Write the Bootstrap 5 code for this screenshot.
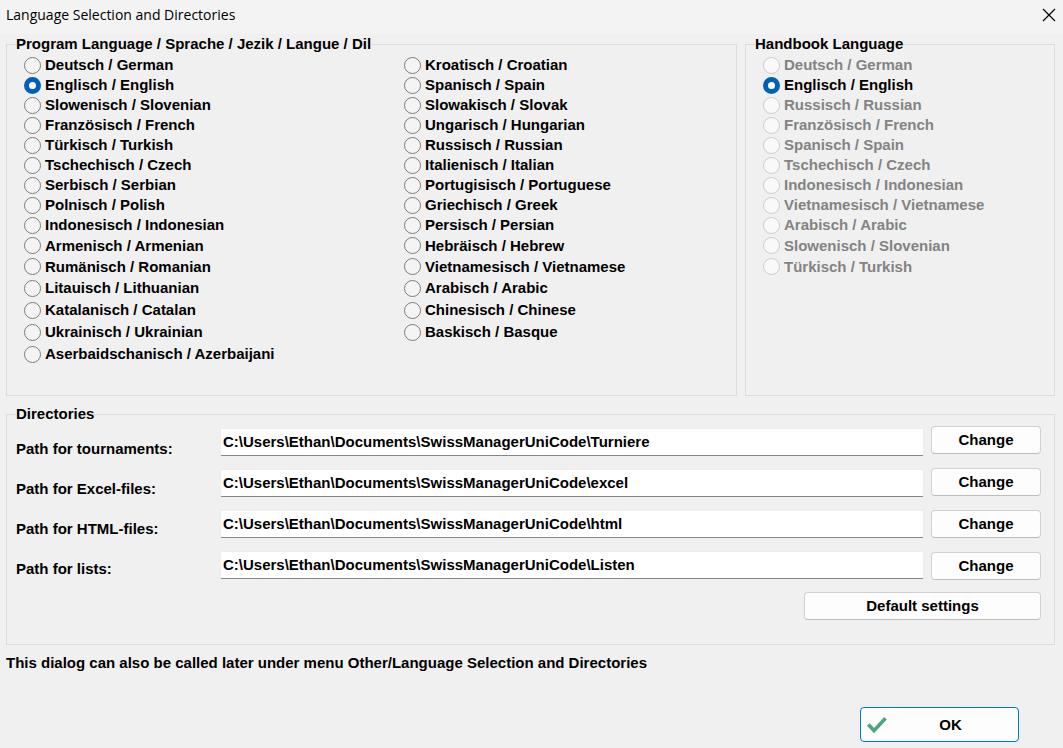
<!DOCTYPE html>
<html lang="en">
<head>
<meta charset="utf-8">
<meta name="viewport" content="width=device-width, initial-scale=1">
<title>Language Selection and Directories</title>
<link href="https://cdn.jsdelivr.net/npm/bootstrap@5.3.0/dist/css/bootstrap.min.css" rel="stylesheet">
<style>
  body { background: #f0f0f0; color: #000; font: bold 15px/20px "Liberation Sans", Arial, sans-serif; }
  .title-bar { background: #f3f3f3; height: 34px; padding: 0 6px 4px; }
  .title-bar h1 { font: 14px/20px "Open Sans", "Noto Sans", sans-serif; }
  .close-btn { width: 16px; height: 16px; color: #000; }
  .dialog-body { padding: 0 8px 0 6px; }
  .languages { display: grid; grid-template-columns: 731fr 310fr; gap: 8px; margin-bottom: 8px; }
  .group { border: 1px solid #dcdcdc; padding: 0 9px; }
  .group legend { float: none; width: auto; font-size: 15px; line-height: 20px; margin: 0; }
  .program { display: grid; grid-template-columns: 380fr 323fr; padding: 1px 0 30px 8px; }
  .handbook { padding: 1px 0 0 8px; }
  .option { display: flex; align-items: center; gap: 4px; height: 20px; min-height: 0; margin: 0; padding: 0; }
  .option:nth-child(n+10) { height: 21px; }
  .option:nth-child(n+12) { height: 22px; }
  .option .form-check-input { flex: none; float: none; width: 17px; height: 17px; margin: 0; background-color: #f4f4f4; border: 1px solid #7d7d7d; }
  .option .form-check-input:checked { background: #fff; border: 5px solid #005fb8; }
  .option .form-check-input:disabled { opacity: 1; background-color: #f9f9f9; border-color: #cbcbcb; }
  .option .form-check-input:disabled ~ .form-check-label { opacity: 1; color: #838383; }
  .paths { display: grid; grid-template-columns: 204px 1fr 110px; align-items: start; }
  .stack { display: flex; flex-direction: column; }
  .path-labels { gap: 20px; padding-top: 15px; }
  .path-inputs { gap: 13px; padding: 4px 7px 0 0; }
  .path-buttons { gap: 14px; padding-top: 2px; }
  .path-inputs .form-control { height: 28px; padding: 0 2px 2px; border: 1px solid #ededed; border-bottom-color: #868686; border-radius: 2px; font: inherit; color: #000; background: #fff; }
  .push { height: 28px; padding: 0; font: inherit; color: #000; background: #fdfdfd; border: 1px solid #d0d0d0; border-bottom-color: #bcbcbc; border-radius: 4px; }
  .default-btn { width: 237px; }
  .actions { padding: 34px 36px 6px 0; }
  .ok-btn { width: 159px; height: 35px; border: 1px solid #0078d4; padding: 0 4px 0 6px; }
</style>
</head>
<body>
<header class="title-bar d-flex align-items-center justify-content-between">
  <h1 class="m-0">Language Selection and Directories</h1>
  <button type="button" class="close-btn btn border-0 p-0 d-flex align-items-center justify-content-center" aria-label="Close">
    <svg width="14" height="14" viewBox="0 0 14 14" fill="none" stroke="currentColor" stroke-width="1.2"><path d="M1 1l12 12M13 1L1 13"/></svg>
  </button>
</header>
<main class="dialog-body">
<form>
  <div class="languages">
    <fieldset class="group">
      <legend>Program Language / Sprache / Jezik / Langue / Dil</legend>
      <div class="program">
        <div>
          <div class="option"><input class="form-check-input" type="radio" name="program" id="p1"><label class="form-check-label" for="p1">Deutsch / German</label></div>
          <div class="option"><input class="form-check-input" type="radio" name="program" id="p2" checked><label class="form-check-label" for="p2">Englisch / English</label></div>
          <div class="option"><input class="form-check-input" type="radio" name="program" id="p3"><label class="form-check-label" for="p3">Slowenisch / Slovenian</label></div>
          <div class="option"><input class="form-check-input" type="radio" name="program" id="p4"><label class="form-check-label" for="p4">Französisch / French</label></div>
          <div class="option"><input class="form-check-input" type="radio" name="program" id="p5"><label class="form-check-label" for="p5">Türkisch / Turkish</label></div>
          <div class="option"><input class="form-check-input" type="radio" name="program" id="p6"><label class="form-check-label" for="p6">Tschechisch / Czech</label></div>
          <div class="option"><input class="form-check-input" type="radio" name="program" id="p7"><label class="form-check-label" for="p7">Serbisch / Serbian</label></div>
          <div class="option"><input class="form-check-input" type="radio" name="program" id="p8"><label class="form-check-label" for="p8">Polnisch / Polish</label></div>
          <div class="option"><input class="form-check-input" type="radio" name="program" id="p9"><label class="form-check-label" for="p9">Indonesisch / Indonesian</label></div>
          <div class="option"><input class="form-check-input" type="radio" name="program" id="p10"><label class="form-check-label" for="p10">Armenisch / Armenian</label></div>
          <div class="option"><input class="form-check-input" type="radio" name="program" id="p11"><label class="form-check-label" for="p11">Rumänisch / Romanian</label></div>
          <div class="option"><input class="form-check-input" type="radio" name="program" id="p12"><label class="form-check-label" for="p12">Litauisch / Lithuanian</label></div>
          <div class="option"><input class="form-check-input" type="radio" name="program" id="p13"><label class="form-check-label" for="p13">Katalanisch / Catalan</label></div>
          <div class="option"><input class="form-check-input" type="radio" name="program" id="p14"><label class="form-check-label" for="p14">Ukrainisch / Ukrainian</label></div>
          <div class="option"><input class="form-check-input" type="radio" name="program" id="p15"><label class="form-check-label" for="p15">Aserbaidschanisch / Azerbaijani</label></div>
        </div>
        <div>
          <div class="option"><input class="form-check-input" type="radio" name="program" id="p16"><label class="form-check-label" for="p16">Kroatisch / Croatian</label></div>
          <div class="option"><input class="form-check-input" type="radio" name="program" id="p17"><label class="form-check-label" for="p17">Spanisch / Spain</label></div>
          <div class="option"><input class="form-check-input" type="radio" name="program" id="p18"><label class="form-check-label" for="p18">Slowakisch / Slovak</label></div>
          <div class="option"><input class="form-check-input" type="radio" name="program" id="p19"><label class="form-check-label" for="p19">Ungarisch / Hungarian</label></div>
          <div class="option"><input class="form-check-input" type="radio" name="program" id="p20"><label class="form-check-label" for="p20">Russisch / Russian</label></div>
          <div class="option"><input class="form-check-input" type="radio" name="program" id="p21"><label class="form-check-label" for="p21">Italienisch / Italian</label></div>
          <div class="option"><input class="form-check-input" type="radio" name="program" id="p22"><label class="form-check-label" for="p22">Portugisisch / Portuguese</label></div>
          <div class="option"><input class="form-check-input" type="radio" name="program" id="p23"><label class="form-check-label" for="p23">Griechisch / Greek</label></div>
          <div class="option"><input class="form-check-input" type="radio" name="program" id="p24"><label class="form-check-label" for="p24">Persisch / Persian</label></div>
          <div class="option"><input class="form-check-input" type="radio" name="program" id="p25"><label class="form-check-label" for="p25">Hebräisch / Hebrew</label></div>
          <div class="option"><input class="form-check-input" type="radio" name="program" id="p26"><label class="form-check-label" for="p26">Vietnamesisch / Vietnamese</label></div>
          <div class="option"><input class="form-check-input" type="radio" name="program" id="p27"><label class="form-check-label" for="p27">Arabisch / Arabic</label></div>
          <div class="option"><input class="form-check-input" type="radio" name="program" id="p28"><label class="form-check-label" for="p28">Chinesisch / Chinese</label></div>
          <div class="option"><input class="form-check-input" type="radio" name="program" id="p29"><label class="form-check-label" for="p29">Baskisch / Basque</label></div>
        </div>
      </div>
    </fieldset>
    <fieldset class="group">
      <legend>Handbook Language</legend>
      <div class="handbook">
        <div class="option"><input class="form-check-input" type="radio" name="handbook" id="h1" disabled><label class="form-check-label" for="h1">Deutsch / German</label></div>
        <div class="option"><input class="form-check-input" type="radio" name="handbook" id="h2" checked><label class="form-check-label" for="h2">Englisch / English</label></div>
        <div class="option"><input class="form-check-input" type="radio" name="handbook" id="h3" disabled><label class="form-check-label" for="h3">Russisch / Russian</label></div>
        <div class="option"><input class="form-check-input" type="radio" name="handbook" id="h4" disabled><label class="form-check-label" for="h4">Französisch / French</label></div>
        <div class="option"><input class="form-check-input" type="radio" name="handbook" id="h5" disabled><label class="form-check-label" for="h5">Spanisch / Spain</label></div>
        <div class="option"><input class="form-check-input" type="radio" name="handbook" id="h6" disabled><label class="form-check-label" for="h6">Tschechisch / Czech</label></div>
        <div class="option"><input class="form-check-input" type="radio" name="handbook" id="h7" disabled><label class="form-check-label" for="h7">Indonesisch / Indonesian</label></div>
        <div class="option"><input class="form-check-input" type="radio" name="handbook" id="h8" disabled><label class="form-check-label" for="h8">Vietnamesisch / Vietnamese</label></div>
        <div class="option"><input class="form-check-input" type="radio" name="handbook" id="h9" disabled><label class="form-check-label" for="h9">Arabisch / Arabic</label></div>
        <div class="option"><input class="form-check-input" type="radio" name="handbook" id="h10" disabled><label class="form-check-label" for="h10">Slowenisch / Slovenian</label></div>
        <div class="option"><input class="form-check-input" type="radio" name="handbook" id="h11" disabled><label class="form-check-label" for="h11">Türkisch / Turkish</label></div>
      </div>
    </fieldset>
  </div>

  <fieldset class="group">
    <legend>Directories</legend>
    <div class="paths pe-1">
      <div class="stack path-labels">
        <label for="d1">Path for tournaments:</label>
        <label for="d2">Path for Excel-files:</label>
        <label for="d3">Path for HTML-files:</label>
        <label for="d4">Path for lists:</label>
      </div>
      <div class="stack path-inputs">
        <input class="form-control" type="text" id="d1" value="C:\Users\Ethan\Documents\SwissManagerUniCode\Turniere">
        <input class="form-control" type="text" id="d2" value="C:\Users\Ethan\Documents\SwissManagerUniCode\excel">
        <input class="form-control" type="text" id="d3" value="C:\Users\Ethan\Documents\SwissManagerUniCode\html">
        <input class="form-control" type="text" id="d4" value="C:\Users\Ethan\Documents\SwissManagerUniCode\Listen">
      </div>
      <div class="stack path-buttons">
        <button type="button" class="btn push">Change</button>
        <button type="button" class="btn push">Change</button>
        <button type="button" class="btn push">Change</button>
        <button type="button" class="btn push">Change</button>
      </div>
    </div>
    <div class="d-flex justify-content-end pe-1 pt-2 pb-4 mt-1">
      <button type="button" class="btn push default-btn">Default settings</button>
    </div>
  </fieldset>

  <p class="mt-2 mb-0">This dialog can also be called later under menu Other/Language Selection and Directories</p>
  <div class="actions d-flex justify-content-end">
    <button type="submit" class="btn push ok-btn d-flex align-items-center">
      <svg width="20" height="18" viewBox="0 0 20 18" fill="none" stroke="#4aa580" stroke-width="3.6"><path d="M1.3 8.6L7 14.6L18.5 2.2"/></svg>
      <span class="flex-fill">OK</span>
    </button>
  </div>
</form>
</main>
<script src="https://cdn.jsdelivr.net/npm/bootstrap@5.3.0/dist/js/bootstrap.bundle.min.js"></script>
</body>
</html>
